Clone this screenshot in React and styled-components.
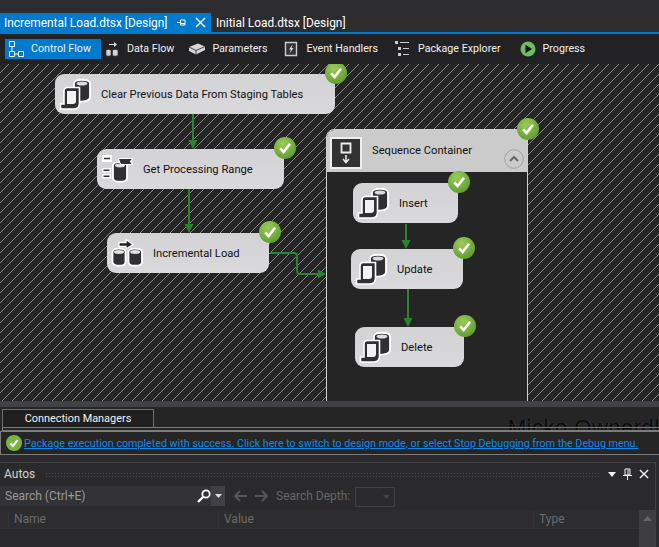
import React from 'react';
import styled, { createGlobalStyle } from 'styled-components';

const Global = createGlobalStyle`
  html, body { margin: 0; padding: 0; background: #2a2a2c; }
  * { box-sizing: border-box; }
`;

const Shell = styled.div`
  width: 659px; height: 547px; overflow: hidden; display: flex; flex-direction: column;
  background: #2a2a2c; font: 11.2px Roboto, "Liberation Sans", Arial, sans-serif; color: #f1f1f1;
`;
const TabStrip = styled.div`
  height: 34px; padding-top: 13px; display: flex; background: #2d2d30; border-bottom: 2px solid #007acc;
`;
const DocTab = styled.div`
  height: 19px; display: flex; align-items: center; white-space: nowrap;
  width: ${p => p.$active ? '211px' : 'auto'};
  padding: ${p => p.$active ? '0 5px 0 4px' : '0 0 0 5px'};
  background: ${p => p.$active ? '#007acc' : 'transparent'};
  color: #fff; font-size: 11.9px;
`;
const TabIcons = styled.span`
  display: flex; align-items: center; gap: 9px; margin-left: auto;
`;
const Toolbar = styled.div`
  height: 30px; padding: 5px 0 5px 5px; display: flex; background: #222224;
`;
const ToolItem = styled.div`
  height: 20px; display: flex; align-items: center; gap: 7px; padding: 0 ${p => p.$pr}px 2px 3px;
  background: ${p => p.$active ? '#007acc' : 'transparent'};
  color: #f1f1f1; white-space: nowrap; font-size: 10.7px;
`;
const ToolIcon = styled.svg`
  width: 16px; height: 16px; flex: none; margin-top: 1px;
`;
const Canvas = styled.div`
  position: relative; height: 337px; overflow: hidden; background-color: #252526;
  background-image: repeating-linear-gradient(135deg, #252526 0, #252526 6.1px, #8a8a8a 6.1px, #8a8a8a 7.07px);
`;
const Wires = styled.svg`
  position: absolute; left: 0; top: 0;
`;
const Task = styled.div`
  position: absolute; left: ${p => p.$x}px; top: ${p => p.$y}px; width: ${p => p.$w}px; height: 40px;
  display: flex; align-items: center; gap: 10px; padding-left: 4px; border-radius: 9px;
  background: linear-gradient(#d3d3d6, #d9d9dc); color: #111; white-space: nowrap;
`;
const TaskIcon = styled.svg`
  width: 32px; height: 32px; flex: none;
`;
const Badge = styled.svg`
  position: absolute; left: ${p => p.$x}px; top: ${p => p.$y}px; width: 22px; height: 22px;
`;
const Container = styled.div`
  position: absolute; left: 326px; top: 65px; width: 202px; height: 300px;
  border: 1px solid #d0d0d0; border-radius: 8px 8px 0 0; background: #252526;
`;
const ContainerHead = styled.div`
  height: 42px; display: flex; align-items: center; gap: 10px; padding: 0 0 2px 3px; position: relative;
  background: #cbcbcb; color: #111; border-radius: 7px 7px 0 0;
`;
const ContainerIcon = styled.svg`
  width: 32px; height: 32px; flex: none; margin-top: 5px;
`;
const Collapse = styled.svg`
  position: absolute; right: 3px; bottom: 3px; width: 20px; height: 20px;
`;
const Splitter = styled.div`
  height: 6px; background: #3f4145;
`;
const ConnArea = styled.div`
  position: relative; height: 24px; padding: 2px 0 0 2px; background: #252526; overflow: hidden;
`;
const ConnTab = styled.div`
  position: relative; width: 152px; height: 18px; border: 1px solid #6f6f6f; border-bottom: 0; background: #1f1f20;
  display: flex; align-items: center; justify-content: center; color: #f1f1f1; font-size: 10.9px;
`;
const ConnRule = styled.div`
  position: relative; height: 4px; border-top: 1px solid #7c7c7c; border-bottom: 1px solid #7c7c7c; border-left: 1px solid #7c7c7c;
`;
const Ghost = styled.div`
  position: absolute; left: 508px; top: 8px; font: 22px "Liberation Sans", Arial, sans-serif; letter-spacing: .5px;
  color: #0b0b0c; white-space: nowrap; text-shadow: 1px 0 0 #3a3a3a;
`;
const StatusBar = styled.div`
  height: 24px; display: flex; align-items: center; gap: 2px; padding-left: 5px;
  border-top: 1px solid #7c7c7c; border-bottom: 1px solid #7c7c7c; border-left: 1px solid #7c7c7c;
  background: #252526; white-space: nowrap;
`;
const StatusIcon = styled.svg`
  width: 16px; height: 16px; flex: none;
`;
const StatusLink = styled.a`
  color: #0f8ae8; text-decoration: underline; font-size: 10.7px;
`;
const Panel = styled.div`
  flex: 1; margin: 7px 3px 0 0; border-top: 1px solid #3f3f46; border-right: 1px solid #3f3f46;
  display: flex; flex-direction: column; min-height: 0;
`;
const PanelTitle = styled.div`
  height: 22px; display: flex; align-items: center; gap: 8px; padding: 0 6px 0 4px; color: #d0d0d0; font-size: 12px;
`;
const Grip = styled.div`
  flex: 1; height: 5px; margin-left: 2px; background-image: radial-gradient(#47474b 0.7px, transparent 0.9px); background-size: 3px 3px;
`;
const PanelIcons = styled.span`
  display: flex; align-items: center; gap: 7px; color: #f1f1f1;
`;
const SearchRow = styled.div`
  height: 20px; margin-top: 1px; display: flex; align-items: center;
`;
const SearchBox = styled.div`
  width: 225px; height: 20px; display: flex; align-items: center; background: #333337; color: #999; font-size: 12px;
  padding-left: 5px;
`;
const SearchLabel = styled.span`
  flex: 1;
`;
const SearchDrop = styled.span`
  width: 14px; height: 20px; background: #3f3f46; display: flex; align-items: center; justify-content: center;
`;
const NavIcons = styled.span`
  display: flex; align-items: center; gap: 8px; margin: 0 7px 0 8px;
`;
const DimLabel = styled.span`
  color: #666; width: 79px; font-size: 12px;
`;
const DepthSelect = styled.div`
  width: 40px; height: 20px; margin-top: 1px; border: 1px solid #3f3f46;
  display: flex; align-items: center; justify-content: flex-end; padding-right: 4px;
`;
const GridArea = styled.div`
  flex: 1; margin-top: 4px; display: flex; min-height: 0;
`;
const GridHead = styled.div`
  flex: 1; height: 19px; display: grid; grid-template-columns: 8px 210px 315px 106px;
  background: #2d2d30; border-bottom: 1px solid #333337; color: #6a6a6a; font-size: 12px;
`;
const HeadCell = styled.div`
  padding-left: 5px; display: flex; align-items: center; border-left: ${p => p.$line ? '1px solid #333337' : '0'};
`;
const ScrollBar = styled.div`
  width: 17px; background: #3e3e42; display: flex; justify-content: center; padding-top: 6px;
`;

const Check = ({ x, y }) => (
  <Badge $x={x} $y={y} viewBox="0 0 22 22">
    <defs>
      <radialGradient id="g" cx="40%" cy="30%" r="75%">
        <stop offset="0" stopColor="#9ccb5a" />
        <stop offset="1" stopColor="#5c9c2e" />
      </radialGradient>
    </defs>
    <circle cx="11" cy="11" r="11" fill="url(#g)" />
    <path d="M6.2 11.4 L9.6 15 L16 6.8" fill="none" stroke="#fff" strokeWidth="2.6" />
  </Badge>
);

const ScriptIcon = () => (
  <TaskIcon viewBox="0 0 32 32">
    <path d="M15 5.500 C15 .5 31 .5 31 5.500 V19 C31 23 25 24 20 23.500 V10 H15 Z" fill="#303032" stroke="#fff" strokeWidth="1.800" />
    <ellipse cx="23" cy="5.500" rx="5.500" ry="2" fill="#dcdcdf" />
    <path d="M5 13 Q5 9.500 8.500 9.500 H20.500 V25 Q20.500 31 15 31 H1.500 V26 H5 Z" fill="#303032" stroke="#fff" strokeWidth="1.600" />
    <path d="M8 13 H17 V23 Q17 26 14 26 H8 Z" fill="#f2f2f2" />
  </TaskIcon>
);
const RangeIcon = () => (
  <TaskIcon viewBox="0 0 32 32">
    <path d="M1 2H11V9H1Z M1 15H10V19.500H1Z M1 21H10V25.500H1Z" fill="#fff" />
    <path d="M3 5.500H9 M2.500 17.200H8.500 M2.500 23.200H8.500" stroke="#303032" strokeWidth="1.600" />
    <path d="M12 12.500 C12 8 26 8 26 12.500 V25 C26 30 12 30 12 25 Z" fill="#303032" stroke="#fff" strokeWidth="1.800" />
    <ellipse cx="19" cy="12.500" rx="5" ry="1.900" fill="#dcdcdf" />
    <path d="M17.500 5.500 H32 L29.500 8.500 L32 11.500 H20 Q18 9 17.500 5.500 Z" fill="#303032" stroke="#fff" strokeWidth="1.200" />
  </TaskIcon>
);
const LoadIcon = () => (
  <TaskIcon viewBox="0 0 32 32">
    <path d="M8 5.500H15V2.500L22 7.500L15 12V9.500H8Z" fill="#222" stroke="#fff" strokeWidth="1.300" />
    <path d="M1.500 15 C1.500 10.500 14.500 10.500 14.500 15 V25 C14.500 30 1.500 30 1.500 25 Z" fill="#303032" stroke="#fff" strokeWidth="1.800" />
    <ellipse cx="8" cy="15" rx="5" ry="1.900" fill="#e0e0e0" />
    <path d="M17.500 15 C17.500 10.500 31 10.500 31 15 V25 C31 30 17.500 30 17.500 25 Z" fill="#303032" stroke="#fff" strokeWidth="1.800" />
    <ellipse cx="24.200" cy="15" rx="5" ry="1.900" fill="#e0e0e0" />
  </TaskIcon>
);

const Pin = () => (
  <svg width="9" height="9" viewBox="0 0 9 9"><path d="M0 4.500H3M3.500 2H8V7H3.500ZM3.500 5.500H8" fill="none" stroke="#fff" /></svg>
);
const Close = ({ s = 11 }) => (
  <svg width={s} height={s} viewBox="0 0 11 11"><path d="M1 1L10 10M10 1L1 10" stroke="#f1f1f1" strokeWidth="1.500" /></svg>
);

const TasksData = [
  { x: 55, y: 10, w: 280, label: 'Clear Previous Data From Staging Tables', I: ScriptIcon },
  { x: 97, y: 85, w: 187, label: 'Get Processing Range', I: RangeIcon },
  { x: 107, y: 169, w: 162, label: 'Incremental Load', I: LoadIcon },
  { x: 353, y: 119, w: 105, label: 'Insert', I: ScriptIcon },
  { x: 351, y: 185, w: 112, label: 'Update', I: ScriptIcon },
  { x: 355, y: 263, w: 109, label: 'Delete', I: ScriptIcon },
];
const Badges = [[325, -2], [274, 73], [259, 157], [517, 54], [448, 107], [453, 173], [454, 251]];
const WireData = [
  ['M193 50V78', 'M188.500 76h9l-4.500 9z'],
  ['M189 125V161', 'M184.500 160h9l-4.500 9z'],
  ['M270 189H294Q297 189 297 192V206Q297 210 300 210H319', 'M318 205.500l8 4.500l-8 4.500z'],
  ['M406 160V177', 'M401.500 176h9l-4.500 9z'],
  ['M408 225V255', 'M403.500 254h9l-4.500 9z'],
];

export default function App() {
  return (
    <Shell>
      <Global />
      <TabStrip>
        <DocTab $active>
          Incremental Load.dtsx [Design]
          <TabIcons><Pin /><Close /></TabIcons>
        </DocTab>
        <DocTab>Initial Load.dtsx [Design]</DocTab>
      </TabStrip>
      <Toolbar>
        <ToolItem $active $pr={10}>
          <ToolIcon viewBox="0 0 16 16">
            <path d="M1.500 .5H6.500V5.500H1.500ZM1.500 10.500H6.500V15.500H1.500ZM10.500 10.500H15.500V15.500H10.500Z" fill="none" stroke="#fff" />
            <path d="M4 6V10M7 13H10" stroke="#fff" />
          </ToolIcon>
          Control Flow
        </ToolItem>
        <ToolItem $pr={12}>
          <ToolIcon viewBox="0 0 16 16">
            <path d="M5 3H10V1L13 3.500L10 6V4H5Z" fill="#ddd" />
            <path d="M2 9.500C2 8 7 8 7 9.500V14C7 15.500 2 15.500 2 14ZM8.500 9.500C8.500 8 14 8 14 9.500V14C14 15.500 8.500 15.500 8.500 14Z" fill="#d0d0d0" stroke="#222" strokeWidth=".6" />
          </ToolIcon>
          Data Flow
        </ToolItem>
        <ToolItem $pr={13}>
          <ToolIcon viewBox="0 0 16 16">
            <path d="M0 6L9 2.500L16 5.500V9L7 13.500L0 10Z" fill="#d6d6d6" />
            <path d="M0 6L7 9.500L16 5.500M7 9.500V13.500" fill="none" stroke="#222" strokeWidth=".8" />
          </ToolIcon>
          Parameters
        </ToolItem>
        <ToolItem $pr={14}>
          <ToolIcon viewBox="0 0 16 16">
            <path d="M2.500 1.500H13.500V14.500H2.500Z" fill="#333" stroke="#ccc" strokeWidth="1.400" />
            <path d="M9.500 3.500L6 8.500H8L6.500 12.500L10.500 7H8.500Z" fill="#ddd" />
          </ToolIcon>
          Event Handlers
        </ToolItem>
        <ToolItem $pr={16}>
          <ToolIcon viewBox="0 0 16 16">
            <path d="M0 0H3V3H0ZM3 6H6V9H3ZM3 12H6V15H3Z" fill="#ccc" />
            <path d="M5 1.500H14M8 7.500H14M8 13.500H14" stroke="#ccc" />
          </ToolIcon>
          Package Explorer
        </ToolItem>
        <ToolItem $pr={14}>
          <ToolIcon viewBox="0 0 16 16">
            <circle cx="8" cy="8" r="7.500" fill="#6cbf60" />
            <path d="M5.500 3.800L12 8L5.500 12.200Z" fill="#111" />
          </ToolIcon>
          Progress
        </ToolItem>
      </Toolbar>
      <Canvas>
        <Container>
          <ContainerHead>
            <ContainerIcon viewBox="0 0 32 32">
              <path d="M0 0H32V32H0Z" fill="#eee" />
              <path d="M2 2H30V30H2Z" fill="#333" />
              <path d="M11.500 6.500H20.500V15.500H11.500Z" fill="#333" stroke="#eee" strokeWidth="1.800" />
              <path d="M16 18V25M13 22L16 25.500L19 22" fill="none" stroke="#eee" strokeWidth="1.500" />
            </ContainerIcon>
            Sequence Container
            <Collapse viewBox="0 0 20 20">
              <circle cx="10" cy="10" r="9.300" fill="none" stroke="#a0a0a0" />
              <path d="M6 12L10 8L14 12" fill="none" stroke="#666" strokeWidth="2" />
            </Collapse>
          </ContainerHead>
        </Container>
        <Wires width="659" height="337" viewBox="0 0 659 337">
          {WireData.map(([line, head]) => (
            <g key={line}>
              <path d={line} fill="none" stroke="#2b8230" strokeWidth="2" />
              <path d={head} fill="#2b8230" />
            </g>
          ))}
        </Wires>
        {TasksData.map(({ x, y, w, label, I }) => (
          <Task key={label} $x={x} $y={y} $w={w}><I />{label}</Task>
        ))}
        {Badges.map(([x, y]) => <Check key={`${x}-${y}`} x={x} y={y} />)}
      </Canvas>
      <Splitter />
      <ConnArea>
        <Ghost>Micko Ownerdl</Ghost>
        <ConnTab>Connection Managers</ConnTab>
        <ConnRule />
      </ConnArea>
      <StatusBar>
        <StatusIcon viewBox="0 0 22 22">
          <circle cx="11" cy="11" r="11" fill="#79b43f" />
          <path d="M6 11.500L9.600 15L16 7" fill="none" stroke="#fff" strokeWidth="3" />
        </StatusIcon>
        <StatusLink>Package execution completed with success. Click here to switch to design mode, or select Stop Debugging from the Debug menu.</StatusLink>
      </StatusBar>
      <Panel>
        <PanelTitle>
          Autos
          <Grip />
          <PanelIcons>
            <svg width="8" height="5" viewBox="0 0 8 5"><path d="M0 0H8L4 5Z" fill="#f1f1f1" /></svg>
            <svg width="9" height="12" viewBox="0 0 9 12"><path d="M2 1H7V7H2ZM0 7.500H9M4.500 8V12M5 1.500V7" fill="none" stroke="#f1f1f1" /></svg>
            <Close s={10} />
          </PanelIcons>
        </PanelTitle>
        <SearchRow>
          <SearchBox>
            <SearchLabel>Search (Ctrl+E)</SearchLabel>
            <svg width="14" height="14" viewBox="0 0 14 14"><circle cx="9" cy="5" r="3.700" fill="none" stroke="#fff" strokeWidth="1.800" /><path d="M6 8L1 13" stroke="#fff" strokeWidth="2.400" /></svg>
            <SearchDrop><svg width="7" height="4" viewBox="0 0 7 4"><path d="M0 0H7L3.500 4Z" fill="#ddd" /></svg></SearchDrop>
          </SearchBox>
          <NavIcons>
            <svg width="14" height="12" viewBox="0 0 14 12"><path d="M14 6H2M7 1L2 6L7 11" fill="none" stroke="#555" strokeWidth="2" /></svg>
            <svg width="14" height="12" viewBox="0 0 14 12"><path d="M0 6H12M7 1L12 6L7 11" fill="none" stroke="#555" strokeWidth="2" /></svg>
          </NavIcons>
          <DimLabel>Search Depth:</DimLabel>
          <DepthSelect><svg width="7" height="4" viewBox="0 0 7 4"><path d="M0 0H7L3.500 4Z" fill="#444" /></svg></DepthSelect>
        </SearchRow>
        <GridArea>
          <GridHead>
            <HeadCell />
            <HeadCell $line>Name</HeadCell>
            <HeadCell $line>Value</HeadCell>
            <HeadCell $line>Type</HeadCell>
          </GridHead>
          <ScrollBar><svg width="9" height="5" viewBox="0 0 9 5"><path d="M0 5H9L4.500 0Z" fill="#666" /></svg></ScrollBar>
        </GridArea>
      </Panel>
    </Shell>
  );
}
